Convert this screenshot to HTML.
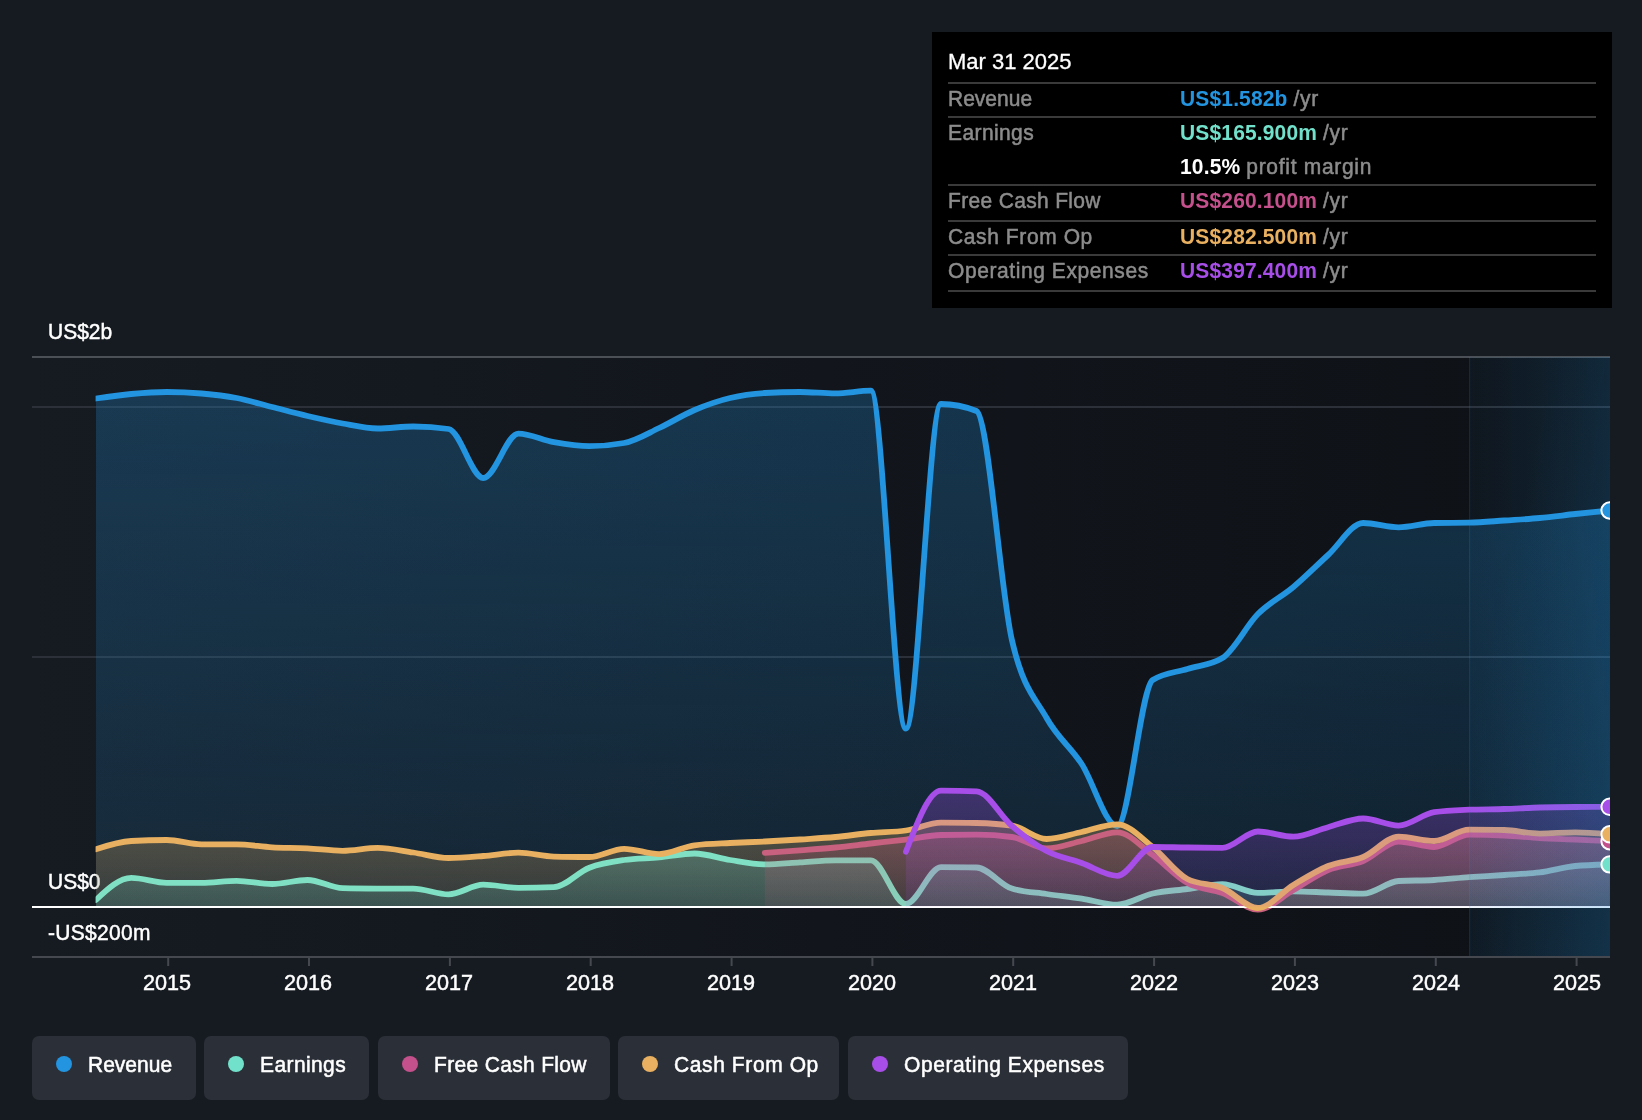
<!DOCTYPE html>
<html><head><meta charset="utf-8">
<style>
html,body{margin:0;padding:0;width:1642px;height:1120px;overflow:hidden;background:#161b22;font-family:"Liberation Sans",sans-serif;}
svg{position:absolute;left:0;top:0}
.t{position:absolute;white-space:nowrap;line-height:1;color:#fff;transform-origin:0 0.8465em;transform:scaleY(1.08);will-change:transform;-webkit-text-stroke:0.3px currentColor}
.yl{font-size:21px;left:48px;-webkit-text-stroke:0.45px #fff}
.xl{font-size:21.6px;top:972.3px;width:80px;text-align:center;transform:none;-webkit-text-stroke:0.45px #fff}
#tip{position:absolute;left:932px;top:32px;width:680px;height:276px;background:#000}
#tip .t{font-size:21px}
.lab{color:#8c8c8c;left:16px;-webkit-text-stroke:0.5px #8c8c8c}
.val{left:248px;font-weight:bold;-webkit-text-stroke:0;letter-spacing:0.15px}
.yr{color:#8c8c8c;font-weight:normal;-webkit-text-stroke:0.5px #8c8c8c;margin-left:0;letter-spacing:0.7px}
.sep{position:absolute;left:16px;width:648px;height:2px;background:#3a3a3a}
.leg{position:absolute;top:1036px;height:64px;background:#2b2f37;border-radius:7px}
.leg .dot{position:absolute;left:24px;top:20px;width:16px;height:16px;border-radius:50%}
.leg .t{font-size:21px;left:55.5px;top:17.5px;-webkit-text-stroke:0.5px #fff}
</style></head><body>
<svg width="1642" height="1120" viewBox="0 0 1642 1120">
<defs><linearGradient id="bgG" x1="0" y1="0" x2="1" y2="0"><stop offset="0" stop-color="#161b22"/><stop offset="1" stop-color="#0e1116"/></linearGradient></defs>
<rect x="32" y="357" width="1578" height="600" fill="url(#bgG)"/>
<rect x="32" y="356" width="1578" height="2" fill="#4b5056"/>
<rect x="32" y="406" width="1578" height="2" fill="#2c3038"/>
<rect x="32" y="656" width="1578" height="2" fill="#2c3038"/>
</svg>
<div class="t yl" style="top:321px">US$2b</div>
<div class="t yl" style="top:871px">US$0</div>
<div class="t yl" style="top:921.5px;letter-spacing:0.3px">-US$200m</div>
<svg width="1642" height="1120" viewBox="0 0 1642 1120">
<defs>
 <linearGradient id="bgG" x1="0" y1="0" x2="1" y2="0">
  <stop offset="0" stop-color="#161b22"/>
  <stop offset="1" stop-color="#0e1116"/>
 </linearGradient>
 <linearGradient id="revG" gradientUnits="userSpaceOnUse" x1="0" y1="390" x2="0" y2="906">
  <stop offset="0" stop-color="#2394df" stop-opacity="0.26"/>
  <stop offset="1" stop-color="#2394df" stop-opacity="0.12"/>
 </linearGradient>
 <linearGradient id="earG" gradientUnits="userSpaceOnUse" x1="0" y1="850" x2="0" y2="906">
  <stop offset="0" stop-color="#72e1cb" stop-opacity="0.26"/>
  <stop offset="1" stop-color="#72e1cb" stop-opacity="0.15"/>
 </linearGradient>
 <linearGradient id="cfoG" gradientUnits="userSpaceOnUse" x1="0" y1="820" x2="0" y2="906">
  <stop offset="0" stop-color="#e8b060" stop-opacity="0.30"/>
  <stop offset="1" stop-color="#e8b060" stop-opacity="0.14"/>
 </linearGradient>
 <linearGradient id="fcfG" gradientUnits="userSpaceOnUse" x1="0" y1="830" x2="0" y2="906">
  <stop offset="0" stop-color="#c85878" stop-opacity="0.30"/>
  <stop offset="1" stop-color="#c85878" stop-opacity="0.10"/>
 </linearGradient>
 <linearGradient id="opG" gradientUnits="userSpaceOnUse" x1="0" y1="790" x2="0" y2="906">
  <stop offset="0" stop-color="#a84ee8" stop-opacity="0.30"/>
  <stop offset="1" stop-color="#a84ee8" stop-opacity="0.10"/>
 </linearGradient>
 <linearGradient id="hlG" x1="0" y1="0" x2="1" y2="0">
  <stop offset="0" stop-color="#2394df" stop-opacity="0.04"/>
  <stop offset="1" stop-color="#2394df" stop-opacity="0.16"/>
 </linearGradient>
 <linearGradient id="hlG2" x1="0" y1="0" x2="1" y2="1">
  <stop offset="0.3" stop-color="#2394df" stop-opacity="0"/>
  <stop offset="1" stop-color="#2394df" stop-opacity="0.11"/>
 </linearGradient>
 <clipPath id="plotClip"><rect x="95.6" y="340" width="1514.4" height="617"/></clipPath>
</defs>
<g clip-path="url(#plotClip)" fill="none" stroke-linecap="round" stroke-linejoin="round">
 <path d="M95.9,398.5C107.7,396.8,119.5,395.1,131.3,394.0C143.2,392.9,155.0,392.0,166.8,392.0C178.4,392.0,189.9,392.5,201.5,393.5C213.2,394.5,224.9,395.8,236.6,398.0C248.4,400.3,260.2,404.0,272.1,407.0C283.9,410.0,295.7,413.2,307.5,416.0C319.2,418.7,330.9,421.4,342.6,423.5C354.3,425.6,366.0,428.5,377.7,428.5C389.5,428.5,401.4,426.5,413.2,426.5C425.0,426.5,436.8,427.3,448.6,429.0C460.2,430.6,471.8,478.0,483.3,478.0C495.0,478.0,506.7,433.6,518.4,433.6C530.3,433.6,542.1,440.1,553.9,442.2C565.7,444.3,577.5,446.2,589.4,446.2C600.9,446.2,612.5,445.1,624.1,443.0C635.8,440.8,647.5,433.5,659.2,428.0C671.0,422.5,682.8,415.0,694.6,410.0C706.5,405.0,718.3,400.8,730.1,398.0C741.7,395.2,753.2,393.7,764.8,393.0C776.5,392.3,788.2,392.0,799.9,392.0C811.7,392.0,823.5,393.4,835.4,393.4C847.2,393.4,859.0,390.7,870.8,390.7C882.5,390.7,894.2,728.6,905.9,728.6C917.6,728.6,929.3,404.0,941.0,404.0C952.8,404.0,964.6,406.3,976.5,411.0C988.3,415.7,1000.1,588.8,1011.9,640.0C1023.5,690.1,1035.1,697.4,1046.6,718.0C1058.3,738.8,1070.0,746.1,1081.7,764.0C1093.5,782.1,1105.4,826.0,1117.2,826.0C1129.0,826.0,1140.8,687.5,1152.7,680.0C1164.2,672.7,1175.8,672.6,1187.4,669.0C1199.0,665.3,1210.7,665.3,1222.4,658.0C1234.3,650.6,1246.1,625.8,1257.9,614.0C1269.7,602.2,1281.6,597.0,1293.4,587.0C1304.9,577.3,1316.5,565.6,1328.1,555.0C1339.8,544.3,1351.5,523.0,1363.2,523.0C1375.0,523.0,1386.8,527.4,1398.6,527.4C1410.5,527.4,1422.3,523.2,1434.1,523.0C1445.8,522.8,1457.5,522.9,1469.2,522.7C1480.9,522.5,1492.6,521.3,1504.3,520.5C1516.1,519.7,1527.9,519.1,1539.7,518.0C1551.6,516.9,1563.4,515.3,1575.2,514.0C1586.8,512.8,1598.3,511.6,1609.9,510.5L1609.9,906.5L95.9,906.5Z" fill="url(#revG)" stroke="none"/>
 <path d="M95.9,398.5C107.7,396.8,119.5,395.1,131.3,394.0C143.2,392.9,155.0,392.0,166.8,392.0C178.4,392.0,189.9,392.5,201.5,393.5C213.2,394.5,224.9,395.8,236.6,398.0C248.4,400.3,260.2,404.0,272.1,407.0C283.9,410.0,295.7,413.2,307.5,416.0C319.2,418.7,330.9,421.4,342.6,423.5C354.3,425.6,366.0,428.5,377.7,428.5C389.5,428.5,401.4,426.5,413.2,426.5C425.0,426.5,436.8,427.3,448.6,429.0C460.2,430.6,471.8,478.0,483.3,478.0C495.0,478.0,506.7,433.6,518.4,433.6C530.3,433.6,542.1,440.1,553.9,442.2C565.7,444.3,577.5,446.2,589.4,446.2C600.9,446.2,612.5,445.1,624.1,443.0C635.8,440.8,647.5,433.5,659.2,428.0C671.0,422.5,682.8,415.0,694.6,410.0C706.5,405.0,718.3,400.8,730.1,398.0C741.7,395.2,753.2,393.7,764.8,393.0C776.5,392.3,788.2,392.0,799.9,392.0C811.7,392.0,823.5,393.4,835.4,393.4C847.2,393.4,859.0,390.7,870.8,390.7C882.5,390.7,894.2,728.6,905.9,728.6C917.6,728.6,929.3,404.0,941.0,404.0C952.8,404.0,964.6,406.3,976.5,411.0C988.3,415.7,1000.1,588.8,1011.9,640.0C1023.5,690.1,1035.1,697.4,1046.6,718.0C1058.3,738.8,1070.0,746.1,1081.7,764.0C1093.5,782.1,1105.4,826.0,1117.2,826.0C1129.0,826.0,1140.8,687.5,1152.7,680.0C1164.2,672.7,1175.8,672.6,1187.4,669.0C1199.0,665.3,1210.7,665.3,1222.4,658.0C1234.3,650.6,1246.1,625.8,1257.9,614.0C1269.7,602.2,1281.6,597.0,1293.4,587.0C1304.9,577.3,1316.5,565.6,1328.1,555.0C1339.8,544.3,1351.5,523.0,1363.2,523.0C1375.0,523.0,1386.8,527.4,1398.6,527.4C1410.5,527.4,1422.3,523.2,1434.1,523.0C1445.8,522.8,1457.5,522.9,1469.2,522.7C1480.9,522.5,1492.6,521.3,1504.3,520.5C1516.1,519.7,1527.9,519.1,1539.7,518.0C1551.6,516.9,1563.4,515.3,1575.2,514.0C1586.8,512.8,1598.3,511.6,1609.9,510.5" stroke="#2394df" stroke-width="5.8"/>
 <path d="M95.9,849.2C107.7,845.4,119.5,841.7,131.3,841.0C143.2,840.3,155.0,840.0,166.8,840.0C178.4,840.0,189.9,844.4,201.5,844.4C213.2,844.4,224.9,844.4,236.6,844.4C248.4,844.4,260.2,846.6,272.1,847.3C283.9,847.9,295.7,847.7,307.5,848.3C319.2,848.9,330.9,850.8,342.6,850.8C354.3,850.8,366.0,847.9,377.7,847.9C389.5,847.9,401.4,850.8,413.2,852.5C425.0,854.2,436.8,858.0,448.6,858.0C460.2,858.0,471.8,856.9,483.3,856.0C495.0,855.1,506.7,852.7,518.4,852.7C530.3,852.7,542.1,856.3,553.9,856.6C565.7,856.9,577.5,857.0,589.4,857.0C600.9,857.0,612.5,848.8,624.1,848.8C635.8,848.8,647.5,854.1,659.2,854.1C671.0,854.1,682.8,846.8,694.6,845.3C706.5,843.8,718.3,843.6,730.1,843.0C741.7,842.4,753.2,842.1,764.8,841.5C776.5,840.9,788.2,840.2,799.9,839.5C811.7,838.7,823.5,838.1,835.4,837.0C847.2,835.9,859.0,834.1,870.8,833.0C882.5,831.9,894.2,832.2,905.9,830.5C917.6,828.8,929.3,822.6,941.0,822.6C952.8,822.6,964.6,822.7,976.5,823.0C988.3,823.3,1000.1,823.9,1011.9,825.6C1023.5,827.3,1035.1,839.0,1046.6,839.0C1058.3,839.0,1070.0,834.4,1081.7,832.0C1093.5,829.5,1105.4,824.3,1117.2,824.3C1129.0,824.3,1140.8,837.7,1152.7,847.0C1164.2,856.1,1175.8,873.1,1187.4,879.0C1199.0,885.0,1210.7,883.2,1222.4,888.0C1234.3,892.8,1246.1,908.0,1257.9,908.0C1269.7,908.0,1281.6,892.1,1293.4,885.0C1304.9,878.1,1316.5,870.7,1328.1,866.0C1339.8,861.3,1351.5,861.8,1363.2,857.0C1375.0,852.1,1386.8,836.7,1398.6,836.7C1410.5,836.7,1422.3,841.0,1434.1,841.0C1445.8,841.0,1457.5,829.6,1469.2,829.6C1480.9,829.6,1492.6,829.7,1504.3,830.0C1516.1,830.3,1527.9,833.6,1539.7,833.6C1551.6,833.6,1563.4,832.3,1575.2,832.3C1586.8,832.3,1598.3,833.3,1609.9,834.3L1609.9,906.5L95.9,906.5Z" fill="url(#cfoG)" stroke="none"/>
 <path d="M95.9,900.0C107.7,889.0,119.5,877.9,131.3,877.9C143.2,877.9,155.0,882.8,166.8,882.8C178.4,882.8,189.9,882.8,201.5,882.8C213.2,882.8,224.9,880.8,236.6,880.8C248.4,880.8,260.2,884.0,272.1,884.0C283.9,884.0,295.7,880.0,307.5,880.0C319.2,880.0,330.9,887.9,342.6,888.2C354.3,888.5,366.0,888.6,377.7,888.6C389.5,888.6,401.4,888.6,413.2,888.6C425.0,888.6,436.8,894.4,448.6,894.4C460.2,894.4,471.8,884.7,483.3,884.7C495.0,884.7,506.7,887.8,518.4,887.8C530.3,887.8,542.1,887.6,553.9,887.2C565.7,886.8,577.5,872.2,589.4,867.7C600.9,863.3,612.5,861.7,624.1,860.0C635.8,858.3,647.5,858.5,659.2,857.4C671.0,856.3,682.8,853.5,694.6,853.5C706.5,853.5,718.3,858.2,730.1,860.0C741.7,861.8,753.2,864.4,764.8,864.4C776.5,864.4,788.2,863.1,799.9,862.4C811.7,861.7,823.5,860.4,835.4,860.4C847.2,860.4,859.0,860.4,870.8,860.4C882.5,860.4,894.2,904.0,905.9,904.0C917.6,904.0,929.3,867.1,941.0,867.1C952.8,867.1,964.6,867.2,976.5,867.5C988.3,867.8,1000.1,884.9,1011.9,888.6C1023.5,892.2,1035.1,892.3,1046.6,894.0C1058.3,895.7,1070.0,896.8,1081.7,898.6C1093.5,900.4,1105.4,904.7,1117.2,904.7C1129.0,904.7,1140.8,896.1,1152.7,893.5C1164.2,890.9,1175.8,890.5,1187.4,889.0C1199.0,887.4,1210.7,884.2,1222.4,884.2C1234.3,884.2,1246.1,892.9,1257.9,892.9C1269.7,892.9,1281.6,891.3,1293.4,891.3C1304.9,891.3,1316.5,892.1,1328.1,892.5C1339.8,892.9,1351.5,893.7,1363.2,893.7C1375.0,893.7,1386.8,881.7,1398.6,881.0C1410.5,880.3,1422.3,880.7,1434.1,880.0C1445.8,879.4,1457.5,877.9,1469.2,877.1C1480.9,876.3,1492.6,875.8,1504.3,875.0C1516.1,874.2,1527.9,873.9,1539.7,872.4C1551.6,870.9,1563.4,867.1,1575.2,866.0C1586.8,864.9,1598.3,864.7,1609.9,864.4L1609.9,906.5L95.9,906.5Z" fill="url(#earG)" stroke="none"/>
 <path d="M95.9,900.0C107.7,889.0,119.5,877.9,131.3,877.9C143.2,877.9,155.0,882.8,166.8,882.8C178.4,882.8,189.9,882.8,201.5,882.8C213.2,882.8,224.9,880.8,236.6,880.8C248.4,880.8,260.2,884.0,272.1,884.0C283.9,884.0,295.7,880.0,307.5,880.0C319.2,880.0,330.9,887.9,342.6,888.2C354.3,888.5,366.0,888.6,377.7,888.6C389.5,888.6,401.4,888.6,413.2,888.6C425.0,888.6,436.8,894.4,448.6,894.4C460.2,894.4,471.8,884.7,483.3,884.7C495.0,884.7,506.7,887.8,518.4,887.8C530.3,887.8,542.1,887.6,553.9,887.2C565.7,886.8,577.5,872.2,589.4,867.7C600.9,863.3,612.5,861.7,624.1,860.0C635.8,858.3,647.5,858.5,659.2,857.4C671.0,856.3,682.8,853.5,694.6,853.5C706.5,853.5,718.3,858.2,730.1,860.0C741.7,861.8,753.2,864.4,764.8,864.4C776.5,864.4,788.2,863.1,799.9,862.4C811.7,861.7,823.5,860.4,835.4,860.4C847.2,860.4,859.0,860.4,870.8,860.4C882.5,860.4,894.2,904.0,905.9,904.0C917.6,904.0,929.3,867.1,941.0,867.1C952.8,867.1,964.6,867.2,976.5,867.5C988.3,867.8,1000.1,884.9,1011.9,888.6C1023.5,892.2,1035.1,892.3,1046.6,894.0C1058.3,895.7,1070.0,896.8,1081.7,898.6C1093.5,900.4,1105.4,904.7,1117.2,904.7C1129.0,904.7,1140.8,896.1,1152.7,893.5C1164.2,890.9,1175.8,890.5,1187.4,889.0C1199.0,887.4,1210.7,884.2,1222.4,884.2C1234.3,884.2,1246.1,892.9,1257.9,892.9C1269.7,892.9,1281.6,891.3,1293.4,891.3C1304.9,891.3,1316.5,892.1,1328.1,892.5C1339.8,892.9,1351.5,893.7,1363.2,893.7C1375.0,893.7,1386.8,881.7,1398.6,881.0C1410.5,880.3,1422.3,880.7,1434.1,880.0C1445.8,879.4,1457.5,877.9,1469.2,877.1C1480.9,876.3,1492.6,875.8,1504.3,875.0C1516.1,874.2,1527.9,873.9,1539.7,872.4C1551.6,870.9,1563.4,867.1,1575.2,866.0C1586.8,864.9,1598.3,864.7,1609.9,864.4" stroke="#7fe0c3" stroke-width="5.8"/>
 <path d="M764.8,852.8C776.5,852.0,788.2,851.2,799.9,850.3C811.7,849.4,823.5,848.6,835.4,847.5C847.2,846.4,859.0,844.8,870.8,843.5C882.5,842.2,894.2,841.0,905.9,839.6C917.6,838.2,929.3,835.2,941.0,835.0C952.8,834.8,964.6,834.7,976.5,834.7C988.3,834.7,1000.1,835.5,1011.9,837.0C1023.5,838.5,1035.1,848.4,1046.6,848.4C1058.3,848.4,1070.0,843.7,1081.7,841.0C1093.5,838.3,1105.4,832.3,1117.2,832.3C1129.0,832.3,1140.8,846.4,1152.7,855.0C1164.2,863.4,1175.8,876.7,1187.4,883.0C1199.0,889.4,1210.7,888.6,1222.4,893.0C1234.3,897.4,1246.1,909.6,1257.9,909.6C1269.7,909.6,1281.6,896.7,1293.4,890.0C1304.9,883.5,1316.5,874.8,1328.1,870.0C1339.8,865.1,1351.5,865.7,1363.2,861.0C1375.0,856.2,1386.8,841.5,1398.6,841.5C1410.5,841.5,1422.3,847.0,1434.1,847.0C1445.8,847.0,1457.5,834.6,1469.2,834.6C1480.9,834.6,1492.6,834.9,1504.3,835.5C1516.1,836.1,1527.9,837.3,1539.7,838.0C1551.6,838.7,1563.4,839.0,1575.2,839.5C1586.8,840.0,1598.3,840.6,1609.9,841.2L1609.9,906.5L764.8,906.5Z" fill="url(#fcfG)" stroke="none"/>
 <path d="M764.8,852.8C776.5,852.0,788.2,851.2,799.9,850.3C811.7,849.4,823.5,848.6,835.4,847.5C847.2,846.4,859.0,844.8,870.8,843.5C882.5,842.2,894.2,841.0,905.9,839.6C917.6,838.2,929.3,835.2,941.0,835.0C952.8,834.8,964.6,834.7,976.5,834.7C988.3,834.7,1000.1,835.5,1011.9,837.0C1023.5,838.5,1035.1,848.4,1046.6,848.4C1058.3,848.4,1070.0,843.7,1081.7,841.0C1093.5,838.3,1105.4,832.3,1117.2,832.3C1129.0,832.3,1140.8,846.4,1152.7,855.0C1164.2,863.4,1175.8,876.7,1187.4,883.0C1199.0,889.4,1210.7,888.6,1222.4,893.0C1234.3,897.4,1246.1,909.6,1257.9,909.6C1269.7,909.6,1281.6,896.7,1293.4,890.0C1304.9,883.5,1316.5,874.8,1328.1,870.0C1339.8,865.1,1351.5,865.7,1363.2,861.0C1375.0,856.2,1386.8,841.5,1398.6,841.5C1410.5,841.5,1422.3,847.0,1434.1,847.0C1445.8,847.0,1457.5,834.6,1469.2,834.6C1480.9,834.6,1492.6,834.9,1504.3,835.5C1516.1,836.1,1527.9,837.3,1539.7,838.0C1551.6,838.7,1563.4,839.0,1575.2,839.5C1586.8,840.0,1598.3,840.6,1609.9,841.2" stroke="#c8607f" stroke-width="5.8"/>
 </g>
<rect x="32" y="906" width="1578" height="2" fill="#ffffff"/>
<g clip-path="url(#plotClip)" fill="none" stroke-linecap="round" stroke-linejoin="round">
 <path d="M95.9,849.2C107.7,845.4,119.5,841.7,131.3,841.0C143.2,840.3,155.0,840.0,166.8,840.0C178.4,840.0,189.9,844.4,201.5,844.4C213.2,844.4,224.9,844.4,236.6,844.4C248.4,844.4,260.2,846.6,272.1,847.3C283.9,847.9,295.7,847.7,307.5,848.3C319.2,848.9,330.9,850.8,342.6,850.8C354.3,850.8,366.0,847.9,377.7,847.9C389.5,847.9,401.4,850.8,413.2,852.5C425.0,854.2,436.8,858.0,448.6,858.0C460.2,858.0,471.8,856.9,483.3,856.0C495.0,855.1,506.7,852.7,518.4,852.7C530.3,852.7,542.1,856.3,553.9,856.6C565.7,856.9,577.5,857.0,589.4,857.0C600.9,857.0,612.5,848.8,624.1,848.8C635.8,848.8,647.5,854.1,659.2,854.1C671.0,854.1,682.8,846.8,694.6,845.3C706.5,843.8,718.3,843.6,730.1,843.0C741.7,842.4,753.2,842.1,764.8,841.5C776.5,840.9,788.2,840.2,799.9,839.5C811.7,838.7,823.5,838.1,835.4,837.0C847.2,835.9,859.0,834.1,870.8,833.0C882.5,831.9,894.2,832.2,905.9,830.5C917.6,828.8,929.3,822.6,941.0,822.6C952.8,822.6,964.6,822.7,976.5,823.0C988.3,823.3,1000.1,823.9,1011.9,825.6C1023.5,827.3,1035.1,839.0,1046.6,839.0C1058.3,839.0,1070.0,834.4,1081.7,832.0C1093.5,829.5,1105.4,824.3,1117.2,824.3C1129.0,824.3,1140.8,837.7,1152.7,847.0C1164.2,856.1,1175.8,873.1,1187.4,879.0C1199.0,885.0,1210.7,883.2,1222.4,888.0C1234.3,892.8,1246.1,908.0,1257.9,908.0C1269.7,908.0,1281.6,892.1,1293.4,885.0C1304.9,878.1,1316.5,870.7,1328.1,866.0C1339.8,861.3,1351.5,861.8,1363.2,857.0C1375.0,852.1,1386.8,836.7,1398.6,836.7C1410.5,836.7,1422.3,841.0,1434.1,841.0C1445.8,841.0,1457.5,829.6,1469.2,829.6C1480.9,829.6,1492.6,829.7,1504.3,830.0C1516.1,830.3,1527.9,833.6,1539.7,833.6C1551.6,833.6,1563.4,832.3,1575.2,832.3C1586.8,832.3,1598.3,833.3,1609.9,834.3" stroke="#e8b060" stroke-width="5.8"/>
 <path d="M905.9,851.7C917.6,821.2,929.3,790.7,941.0,790.7C952.8,790.7,964.6,790.9,976.5,791.4C988.3,791.9,1000.1,816.0,1011.9,826.0C1023.5,835.8,1035.1,844.8,1046.6,851.0C1058.3,857.2,1070.0,858.9,1081.7,863.0C1093.5,867.2,1105.4,875.8,1117.2,875.8C1129.0,875.8,1140.8,847.0,1152.7,847.0C1164.2,847.0,1175.8,847.4,1187.4,847.5C1199.0,847.6,1210.7,847.8,1222.4,847.8C1234.3,847.8,1246.1,831.5,1257.9,831.5C1269.7,831.5,1281.6,836.7,1293.4,836.7C1304.9,836.7,1316.5,830.2,1328.1,827.2C1339.8,824.1,1351.5,818.5,1363.2,818.5C1375.0,818.5,1386.8,825.6,1398.6,825.6C1410.5,825.6,1422.3,813.9,1434.1,812.2C1445.8,810.5,1457.5,810.2,1469.2,809.7C1480.9,809.2,1492.6,809.4,1504.3,809.0C1516.1,808.6,1527.9,807.8,1539.7,807.5C1551.6,807.2,1563.4,807.1,1575.2,807.0C1586.8,806.9,1598.3,806.8,1609.9,806.8L1609.9,906.5L905.9,906.5Z" fill="url(#opG)" stroke="none"/>
 <path d="M905.9,851.7C917.6,821.2,929.3,790.7,941.0,790.7C952.8,790.7,964.6,790.9,976.5,791.4C988.3,791.9,1000.1,816.0,1011.9,826.0C1023.5,835.8,1035.1,844.8,1046.6,851.0C1058.3,857.2,1070.0,858.9,1081.7,863.0C1093.5,867.2,1105.4,875.8,1117.2,875.8C1129.0,875.8,1140.8,847.0,1152.7,847.0C1164.2,847.0,1175.8,847.4,1187.4,847.5C1199.0,847.6,1210.7,847.8,1222.4,847.8C1234.3,847.8,1246.1,831.5,1257.9,831.5C1269.7,831.5,1281.6,836.7,1293.4,836.7C1304.9,836.7,1316.5,830.2,1328.1,827.2C1339.8,824.1,1351.5,818.5,1363.2,818.5C1375.0,818.5,1386.8,825.6,1398.6,825.6C1410.5,825.6,1422.3,813.9,1434.1,812.2C1445.8,810.5,1457.5,810.2,1469.2,809.7C1480.9,809.2,1492.6,809.4,1504.3,809.0C1516.1,808.6,1527.9,807.8,1539.7,807.5C1551.6,807.2,1563.4,807.1,1575.2,807.0C1586.8,806.9,1598.3,806.8,1609.9,806.8" stroke="#a84ee8" stroke-width="5.8"/>
 <rect x="1469.5" y="357" width="140.5" height="600" fill="url(#hlG)"/>
 <rect x="1469.5" y="357" width="140.5" height="600" fill="url(#hlG2)"/>
 <rect x="1469.2" y="357" width="1" height="600" fill="#2394df" fill-opacity="0.22"/>
 <circle cx="1609.6" cy="510.5" r="8.2" fill="#2394df" stroke="#fff" stroke-width="2"/>
 <circle cx="1609.6" cy="806.8" r="8.2" fill="#a84ee8" stroke="#fff" stroke-width="2"/>
 <circle cx="1609.6" cy="841.2" r="8.2" fill="#c4508c" stroke="#fff" stroke-width="2"/>
 <circle cx="1609.6" cy="834.3" r="8.2" fill="#e8b060" stroke="#fff" stroke-width="2"/>
 <circle cx="1609.6" cy="864.4" r="8.2" fill="#72e1cb" stroke="#fff" stroke-width="2"/>
</g>
<rect x="32" y="956" width="1578" height="2" fill="#45494f"/>
<g fill="#45494f">
 <rect x="167.2" y="957" width="2" height="9"/>
 <rect x="308.0" y="957" width="2" height="9"/>
 <rect x="448.9" y="957" width="2" height="9"/>
 <rect x="589.7" y="957" width="2" height="9"/>
 <rect x="730.6" y="957" width="2" height="9"/>
 <rect x="871.4" y="957" width="2" height="9"/>
 <rect x="1012.2" y="957" width="2" height="9"/>
 <rect x="1153.1" y="957" width="2" height="9"/>
 <rect x="1293.9" y="957" width="2" height="9"/>
 <rect x="1434.8" y="957" width="2" height="9"/>
 <rect x="1575.6" y="957" width="2" height="9"/>
</g>
</svg>


<div class="t xl" style="left:127px">2015</div>
<div class="t xl" style="left:268px">2016</div>
<div class="t xl" style="left:409px">2017</div>
<div class="t xl" style="left:550px">2018</div>
<div class="t xl" style="left:691px">2019</div>
<div class="t xl" style="left:832px">2020</div>
<div class="t xl" style="left:973px">2021</div>
<div class="t xl" style="left:1114px">2022</div>
<div class="t xl" style="left:1255px">2023</div>
<div class="t xl" style="left:1396px">2024</div>
<div class="t xl" style="left:1537px">2025</div>

<div id="tip">
 <div class="t" style="left:16px;top:19.3px;color:#fff;font-size:22px;transform:none">Mar 31 2025</div>
 <div class="sep" style="top:50px"></div>
 <div class="t lab" style="top:55.5px">Revenue</div>
 <div class="t val" style="top:55.5px;color:#2394df">US$1.582b <span class="yr">/yr</span></div>
 <div class="sep" style="top:84px"></div>
 <div class="t lab" style="top:89.5px;letter-spacing:0.4px">Earnings</div>
 <div class="t val" style="top:89.5px;color:#72e1cb">US$165.900m <span class="yr">/yr</span></div>
 <div class="t val" style="top:123.5px;color:#fff">10.5% <span class="yr">profit margin</span></div>
 <div class="sep" style="top:152px"></div>
 <div class="t lab" style="top:157.5px;letter-spacing:0.33px">Free Cash Flow</div>
 <div class="t val" style="top:157.5px;color:#c4508c">US$260.100m <span class="yr">/yr</span></div>
 <div class="sep" style="top:188px"></div>
 <div class="t lab" style="top:193.5px;letter-spacing:0.6px">Cash From Op</div>
 <div class="t val" style="top:193.5px;color:#e8b060">US$282.500m <span class="yr">/yr</span></div>
 <div class="sep" style="top:222px"></div>
 <div class="t lab" style="top:227.5px;letter-spacing:0.58px">Operating Expenses</div>
 <div class="t val" style="top:227.5px;color:#a84ee8">US$397.400m <span class="yr">/yr</span></div>
 <div class="sep" style="top:258px"></div>
</div>

<div class="leg" style="left:32px;width:164px"><div class="dot" style="background:#2394df"></div><div class="t">Revenue</div></div>
<div class="leg" style="left:204px;width:165px"><div class="dot" style="background:#72e1cb"></div><div class="t" style="letter-spacing:0.4px">Earnings</div></div>
<div class="leg" style="left:378px;width:232px"><div class="dot" style="background:#c4508c"></div><div class="t" style="letter-spacing:0.33px">Free Cash Flow</div></div>
<div class="leg" style="left:618px;width:221px"><div class="dot" style="background:#e8b060"></div><div class="t" style="letter-spacing:0.6px">Cash From Op</div></div>
<div class="leg" style="left:848px;width:280px"><div class="dot" style="background:#a84ee8"></div><div class="t" style="letter-spacing:0.58px">Operating Expenses</div></div>
</body></html>
